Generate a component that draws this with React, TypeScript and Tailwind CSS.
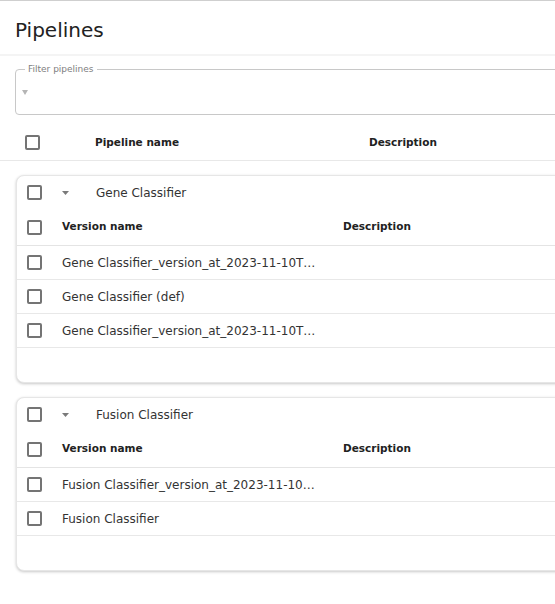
import React from 'react';

type Pipeline = {
  name: string;
  versions: string[];
};

const pipelines: Pipeline[] = [
  {
    name: 'Gene Classifier',
    versions: [
      'Gene Classifier_version_at_2023-11-10T12:31:04.118Z',
      'Gene Classifier (def)',
      'Gene Classifier_version_at_2023-11-10T09:12:44.520Z',
    ],
  },
  {
    name: 'Fusion Classifier',
    versions: ['Fusion Classifier_version_at_2023-11-10T14:02:11.903Z', 'Fusion Classifier'],
  },
];

const Check = () => (
  <div className="w-[15px] h-[15px] shrink-0 rounded-[2px] border-2 border-[#747474] bg-white" />
);

const Caret = () => (
  <svg width="7" height="4" viewBox="0 0 7 4" className="shrink-0">
    <path d="M0 0h7L3.5 4z" fill="#7a7a7a" />
  </svg>
);

const PipelineCard = ({ p }: { p: Pipeline }) => (
  <div className="mt-[14px] ml-[16px] w-[640px] rounded-[8px] border border-[#e6e6e6] bg-white shadow-[0_1px_3px_rgba(0,0,0,0.22)]">
    <div className="h-[33px] flex items-center pl-[10px]">
      <Check />
      <div className="ml-[20px]">
        <Caret />
      </div>
      <span className="ml-[27px] text-[12px] text-[#333]">{p.name}</span>
    </div>
    <div className="h-[37px] flex items-center pl-[10px] border-b border-[#e4e4e4]">
      <Check />
      <span className="ml-[20px] w-[256px] text-[10.5px] font-bold text-[#222]">Version name</span>
      <span className="ml-[25px] text-[10.5px] font-bold text-[#222]">Description</span>
    </div>
    {p.versions.map((v) => (
      <div key={v} className="h-[34px] flex items-center pl-[10px] border-b border-[#e8e8e8]">
        <Check />
        <span className="ml-[20px] w-[256px] truncate text-[12px] text-[#333]">{v}</span>
        <span className="ml-[25px]" />
      </div>
    ))}
    <div className="h-[34px]" />
  </div>
);

export default function App() {
  return (
    <div className="w-[555px] h-[604px] overflow-hidden bg-white font-['DejaVu_Sans',sans-serif] text-[#222]">
      <div className="border-t border-[#cfcfcf]" />
      <div className="h-[55px] pl-[15px] pt-[17px] text-[20px] leading-[24px] text-[#222] border-b-2 border-[#f4f4f4]">
        Pipelines
      </div>

      <div className="mt-[13px] ml-[15px] relative w-[640px] h-[46px] rounded-[4px] border border-[#c8c8c8] pl-[6px] pt-[20px]">
        <span className="absolute left-[9px] top-[-7px] bg-white px-[3px] text-[9px] leading-[12px] text-[#808080]">
          Filter pipelines
        </span>
        <svg width="6" height="5" viewBox="0 0 6 5" className="block">
          <path d="M0 0h6L3 5z" fill="#b5b5b5" />
        </svg>
      </div>

      <div className="mt-[10px] w-[640px] h-[36px] flex items-center pl-[25px] border-b border-[#e8e8e8]">
        <Check />
        <span className="ml-[55px] w-[274px] text-[10.5px] font-bold text-[#222]">Pipeline name</span>
        <span className="text-[10.5px] font-bold text-[#222]">Description</span>
      </div>

      {pipelines.map((p) => (
        <PipelineCard key={p.name} p={p} />
      ))}
    </div>
  );
}
